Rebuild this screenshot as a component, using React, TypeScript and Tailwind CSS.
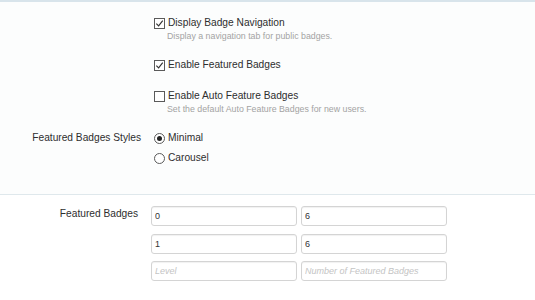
import React from 'react';

function CheckBox({ checked }: { checked: boolean }) {
  return (
    <span className="mr-[3px] flex h-[11px] w-[11px] shrink-0 items-center justify-center border border-[#5a5a5a] bg-white">
      {checked && (
        <svg viewBox="0 0 10 10" className="h-[9px] w-[9px]">
          <path d="M1.5 5.2 L4 7.6 L8.6 1.8" fill="none" stroke="#333" strokeWidth="1.3" />
        </svg>
      )}
    </span>
  );
}

function Radio({ checked }: { checked: boolean }) {
  return (
    <span className="mr-[3px] flex h-[11px] w-[11px] shrink-0 items-center justify-center rounded-full border border-[#5a5a5a] bg-white">
      {checked && <span className="h-[5px] w-[5px] rounded-full bg-[#222]" />}
    </span>
  );
}

function CheckRow({ label, hint, checked, className = '' }: { label: string; hint?: string; checked: boolean; className?: string }) {
  return (
    <div className={className}>
      <div className="flex h-[14px] items-center text-[10.2px] text-[#2e2e2e]">
        <CheckBox checked={checked} />
        <span>{label}</span>
      </div>
      {hint && <div className="h-[12px] pl-[13px] text-[8.8px] leading-[12px] text-[#a3a3a3]">{hint}</div>}
    </div>
  );
}

function Field({ value, placeholder }: { value?: string; placeholder?: string }) {
  return (
    <input
      readOnly
      value={value}
      placeholder={placeholder}
      className="h-5 w-[146px] rounded-[3px] border border-[#d4d4d4] bg-white px-[3px] text-[9px] text-[#333] shadow-[inset_0_1px_1px_rgba(0,0,0,0.06)] outline-none placeholder:italic placeholder:text-[#c4c4c4]"
    />
  );
}

export default function App() {
  return (
    <div className="h-[300px] w-[535px] overflow-hidden bg-white font-['Liberation_Sans',Arial,sans-serif]">
      <div className="border-t-2 border-[#d8e4eb] bg-[#fcfdfd] pb-[29px]">
        <div className="grid grid-cols-[141px_1fr] gap-x-[13px]">
          <div />
          <div className="pt-[14px]">
            <CheckRow checked label="Display Badge Navigation" hint="Display a navigation tab for public badges." />
            <CheckRow checked label="Enable Featured Badges" className="mt-4" />
            <CheckRow
              checked={false}
              label="Enable Auto Feature Badges"
              hint="Set the default Auto Feature Badges for new users."
              className="mt-[17px]"
            />
          </div>
          <div className="mt-4 flex h-[14px] items-center justify-end text-[10.2px] text-[#2e2e2e]">Featured Badges Styles</div>
          <div className="mt-4 flex flex-col gap-[6px] text-[10.2px] text-[#2e2e2e]">
            <div className="flex h-[14px] items-center">
              <Radio checked />
              <span>Minimal</span>
            </div>
            <div className="flex h-[14px] items-center">
              <Radio checked={false} />
              <span>Carousel</span>
            </div>
          </div>
        </div>
      </div>
      <div className="border-t border-[#dfe8ec] pt-[11px]">
        <div className="flex">
          <div className="w-[138px] pt-[1px] text-right text-[10.2px] leading-[14px] text-[#2e2e2e]">Featured Badges</div>
          <div className="ml-[13px] flex flex-col gap-[7.5px]">
            <div className="flex gap-1">
              <Field value="0" />
              <Field value="6" />
            </div>
            <div className="flex gap-1">
              <Field value="1" />
              <Field value="6" />
            </div>
            <div className="flex gap-1">
              <Field placeholder="Level" />
              <Field placeholder="Number of Featured Badges" />
            </div>
          </div>
        </div>
      </div>
    </div>
  );
}
